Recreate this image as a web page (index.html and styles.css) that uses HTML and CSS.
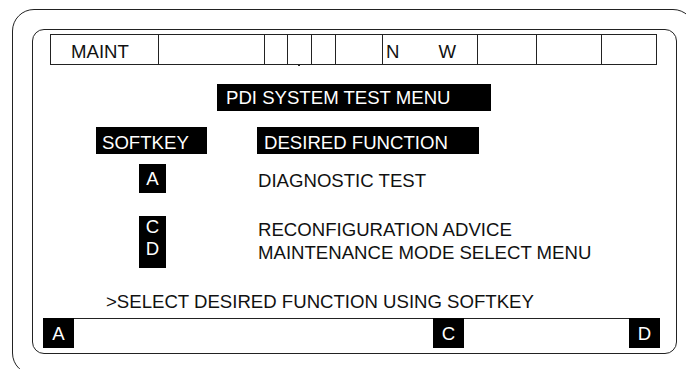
FILE: index.html
```html
<!DOCTYPE html>
<html>
    <head>
        <title>PDI System Test Menu</title>
        <meta charset=utf8>
        <link rel="stylesheet" href="styles.css">
    </head>
    <body>
        <div id="page">
            <div id="bezel">
                <div id="screen">
                    <div id="status">
                        <div class="cell maint">MAINT</div>
                        <div class="cell w106"></div>
                        <div class="cell w23"></div>
                        <div class="cell w24 dot"></div>
                        <div class="cell w24"></div>
                        <div class="cell w47"></div>
                        <div class="cell w95 nw"><span>N</span><span>W</span></div>
                        <div class="cell w59"></div>
                        <div class="cell w65"></div>
                        <div class="cell w54 last"></div>
                    </div>

                    <div id="title" class="inv">PDI SYSTEM TEST MENU</div>

                    <div class="row head">
                        <div class="inv softkey">SOFTKEY</div>
                        <div class="inv function">DESIRED FUNCTION</div>
                    </div>
                    <div class="row one">
                        <div class="inv key">A</div>
                        <div class="desc">DIAGNOSTIC TEST</div>
                    </div>
                    <div class="row two">
                        <div class="inv key tall">C<br>D</div>
                        <div class="desc lines">RECONFIGURATION ADVICE<br>MAINTENANCE MODE SELECT MENU</div>
                    </div>

                    <div id="prompt">&gt;SELECT DESIRED FUNCTION USING SOFTKEY</div>

                    <div id="softkeys">
                        <div class="inv sk">A</div>
                        <div class="inv sk c">C</div>
                        <div class="inv sk d">D</div>
                    </div>
                </div>
            </div>
        </div>
    </body>
</html>
```

FILE: styles.css
```css
html {
    font-family: "Liberation Sans", Arial, sans-serif;
    font-size: 18.6px;
    color: #111;
    overflow: hidden;
    width: 686px;
    height: 369px;
}
body {
    margin: 0;
    padding: 0;
    width: 686px;
    height: 369px;
    background: white;
}
#page {
    width: 686px;
    height: 369px;
    overflow: hidden;
    padding-top: 9px;
    box-sizing: border-box;
}
#bezel {
    margin-left: 12px;
    width: 683px;
    height: 366px;
    box-sizing: border-box;
    border: 1.2px solid #222;
    border-radius: 22px;
    padding: 19px 0 0 19px;
}
#screen {
    width: 645px;
    height: 325px;
    box-sizing: border-box;
    border: 1px solid #222;
    border-radius: 12px;
    display: flex;
    flex-direction: column;
}
#status {
    display: flex;
    margin: 4px 0 0 17px;
    width: 607px;
    height: 31px;
    box-sizing: border-box;
    border: 1px solid #222;
}
.cell {
    height: 29px;
    box-sizing: border-box;
    border-right: 1px solid #222;
    padding-top: 6px;
    line-height: 22px;
    position: relative;
}
.cell.last {
    border-right: none;
}
.maint { width: 108px; padding-left: 20px; }
.w106 { width: 106px; }
.w23 { width: 23px; }
.w24 { width: 24px; }
.w47 { width: 47px; }
.w95 { width: 95px; }
.w59 { width: 59px; }
.w65 { width: 65px; }
.w54 { width: 54px; }
.nw {
    display: flex;
    gap: 39px;
    padding-left: 3px;
}
.dot::after {
    content: "";
    position: absolute;
    left: 10px;
    bottom: -2px;
    width: 2px;
    height: 2px;
    background: #222;
}
.inv {
    background: #000;
    color: #fff;
}
#title {
    margin: 19px 0 0 184px;
    width: 274px;
    height: 27px;
    box-sizing: border-box;
    padding: 3px 0 0 9px;
    line-height: 22px;
}
.row {
    display: grid;
    grid-template-columns: 111px auto;
    column-gap: 50px;
    margin-left: 63px;
    align-items: start;
}
.row.head { margin-top: 16px; }
.row.one { margin-top: 10px; }
.row.two { margin-top: 21px; }
.softkey, .function {
    height: 27px;
    box-sizing: border-box;
    padding: 5px 0 0 6px;
    line-height: 22px;
}
.function {
    width: 222px;
    padding-left: 7px;
}
.key {
    justify-self: center;
    width: 27px;
    height: 29px;
    text-align: center;
    line-height: 29px;
    margin-left: 2px;
}
.key.tall {
    height: 52px;
    line-height: 22px;
}
.desc {
    padding: 2px 0 0 1px;
    line-height: 29px;
}
.desc.lines {
    line-height: 23px;
    padding-top: 2px;
}
#prompt {
    margin: 23px 0 0 73px;
    line-height: 22px;
}
#softkeys {
    display: flex;
    margin: 5px 0 0 10px;
    width: 617px;
    border-top: 1px solid #222;
}
.sk {
    width: 31px;
    height: 30px;
    margin-top: -1px;
    text-align: center;
    line-height: 31px;
}
.sk.c { margin-left: 359px; }
.sk.d { margin-left: auto; }
```
